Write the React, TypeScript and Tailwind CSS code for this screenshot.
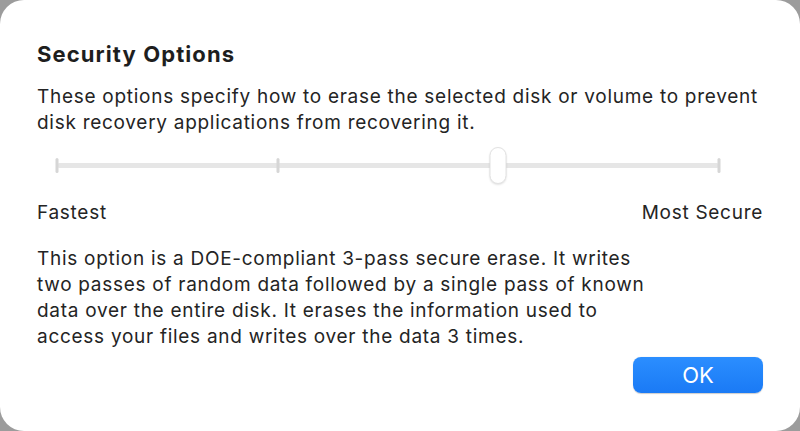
const TICKS = [0, 1, 2, 3];

function SecuritySlider({ value }: { value: number }) {
  return (
    <div className="relative ml-[20px] mr-[44px] h-[40px]">
      <div className="absolute left-0 right-0 top-[18px] h-[5px] rounded-full bg-[#e6e6e6]" />
      {TICKS.map((t) => (
        <div
          key={t}
          className="absolute top-[13px] h-[15px] w-[3px] -translate-x-1/2 rounded-full bg-[#d6d6d6]"
          style={{ left: `${(t / 3) * 100}%` }}
        />
      ))}
      <div
        className="absolute top-[2px] h-[37px] w-[17px] -translate-x-1/2 rounded-full border border-[#e2e2e2] bg-white shadow-[0_1px_2px_rgba(0,0,0,0.12)]"
        style={{ left: `${(value / 3) * 100}%` }}
      />
    </div>
  );
}

export default function App() {
  return (
    <div className="h-[431px] w-[800px] bg-[#9c9c9c] font-['Inter',sans-serif]">
      <div className="flex h-full w-full flex-col rounded-[24px] bg-white px-[37px] pt-[40px] text-[#242424]">
        <h1 className="text-[22px] font-bold leading-[28px] tracking-[1.1px] text-[#1e1e1e]">
          Security Options
        </h1>
        <p className="mt-[16px] text-[19px] leading-[26px] tracking-[0.72px]">
          These options specify how to erase the selected disk or volume to prevent
          <br />
          disk recovery applications from recovering it.
        </p>
        <div className="mt-[9px]">
          <SecuritySlider value={2} />
        </div>
        <div className="mt-[15px] flex justify-between text-[19px] leading-[26px] tracking-[0.72px]">
          <span>Fastest</span>
          <span>Most Secure</span>
        </div>
        <p className="mt-[20px] text-[19px] leading-[26px] tracking-[0.72px]">
          This option is a DOE-compliant 3-pass secure erase. It writes
          <br />
          two passes of random data followed by a single pass of known
          <br />
          data over the entire disk. It erases the information used to
          <br />
          access your files and writes over the data 3 times.
        </p>
        <div className="mt-[7px] flex justify-end">
          <button className="h-[36px] w-[130px] rounded-[8px] bg-gradient-to-b from-[#2b8eff] to-[#1a7af5] text-[22px] leading-none text-white shadow-[0_0.5px_1px_rgba(0,0,0,0.2)]">
            OK
          </button>
        </div>
      </div>
    </div>
  );
}
